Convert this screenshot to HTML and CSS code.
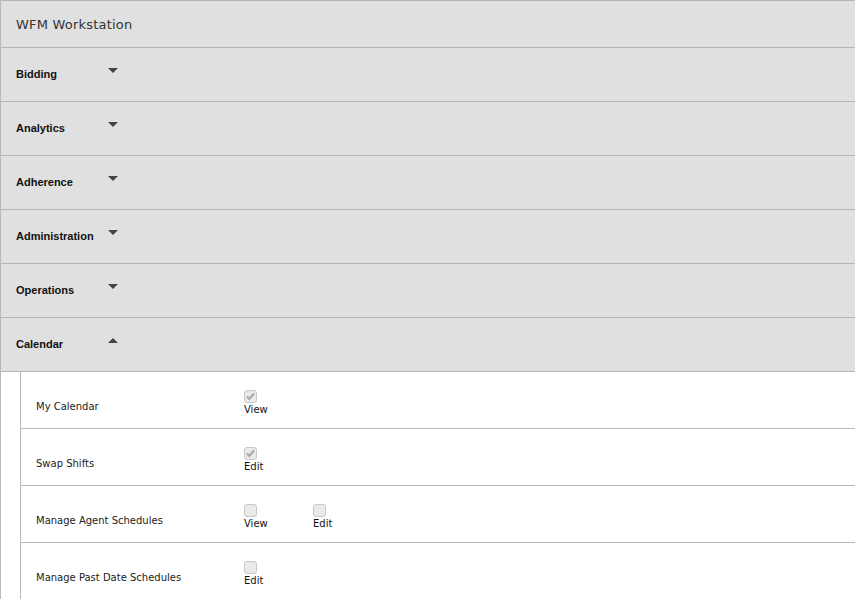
FILE: index.html
```html
<!DOCTYPE html>
<html lang="en">
<head>
  <meta charset="UTF-8">
  <title>WFM Workstation</title>
  <link rel="stylesheet" href="styles.css">
</head>
<body>

  <div class="panel">
    <div class="title">WFM Workstation</div>

    <div class="section"><span class="section-name">Bidding</span><span class="caret down"></span></div>
    <div class="section"><span class="section-name">Analytics</span><span class="caret down"></span></div>
    <div class="section"><span class="section-name">Adherence</span><span class="caret down"></span></div>
    <div class="section"><span class="section-name">Administration</span><span class="caret down"></span></div>
    <div class="section"><span class="section-name">Operations</span><span class="caret down"></span></div>
    <div class="section open"><span class="section-name">Calendar</span><span class="caret up"></span></div>

    <div class="perms">
      <div class="perm-row">
        <div class="perm-name">My Calendar</div>
        <label class="perm-opt">
          <span class="box"><svg width="11" height="11" viewBox="0 0 11 11"><path d="M2 5.5 L4.3 8 L9 2.5" fill="none" stroke="#a8a8a8" stroke-width="2"/></svg></span>
          <span>View</span>
        </label>
      </div>
      <div class="perm-row">
        <div class="perm-name">Swap Shifts</div>
        <label class="perm-opt">
          <span class="box"><svg width="11" height="11" viewBox="0 0 11 11"><path d="M2 5.5 L4.3 8 L9 2.5" fill="none" stroke="#a8a8a8" stroke-width="2"/></svg></span>
          <span>Edit</span>
        </label>
      </div>
      <div class="perm-row">
        <div class="perm-name">Manage Agent Schedules</div>
        <label class="perm-opt">
          <span class="box"></span>
          <span>View</span>
        </label>
        <label class="perm-opt">
          <span class="box"></span>
          <span>Edit</span>
        </label>
      </div>
      <div class="perm-row">
        <div class="perm-name">Manage Past Date Schedules</div>
        <label class="perm-opt">
          <span class="box"></span>
          <span>Edit</span>
        </label>
      </div>
    </div>
  </div>

</body>
</html>
```

FILE: styles.css
```css
body {
  margin: 0;
  background: white;
  font-family: "DejaVu Sans", Verdana, sans-serif;
  color: #222;
}
.panel {
  border-left: 1px solid #b8b8b8;
}
.title {
  height: 46px;
  line-height: 48px;
  padding-left: 15px;
  font-size: 13px;
  letter-spacing: 0.2px;
  color: #333;
  background: #e0e0e0;
  border-top: 1px solid #b3b3b3;
}
.section {
  display: flex;
  align-items: center;
  height: 53px;
  padding-left: 15px;
  background: #e0e0e0;
  border-top: 1px solid #b3b3b3;
  font-family: "Liberation Sans", Arial, sans-serif;
  font-weight: bold;
  font-size: 11px;
  color: #111;
}
.section.open {
  border-bottom: 1px solid #b3b3b3;
}
.section-name {
  width: 92px;
  padding-bottom: 1px;
}
.caret {
  width: 0;
  height: 0;
  margin-top: -8px;
  border-left: 5px solid transparent;
  border-right: 5px solid transparent;
}
.caret.down {
  border-top: 5px solid #444;
}
.caret.up {
  border-bottom: 5px solid #444;
}
.perms {
  margin-left: 19px;
  border-left: 1px solid #b8b8b8;
}
.perm-row {
  display: flex;
  align-items: center;
  height: 56px;
  padding-left: 15px;
  border-bottom: 1px solid #b8b8b8;
  font-size: 10px;
}
.perm-row:last-child {
  border-bottom: none;
}
.perm-name {
  width: 208px;
  padding-top: 13px;
  color: #222;
}
.perm-opt {
  display: flex;
  flex-direction: column;
  width: 69px;
  padding-top: 5px;
  color: #111;
}
.box {
  display: flex;
  align-items: center;
  justify-content: center;
  width: 11px;
  height: 11px;
  margin-bottom: 1px;
  background: #eaeaea;
  border: 1px solid #c8c8c8;
  border-radius: 3px;
}
```
